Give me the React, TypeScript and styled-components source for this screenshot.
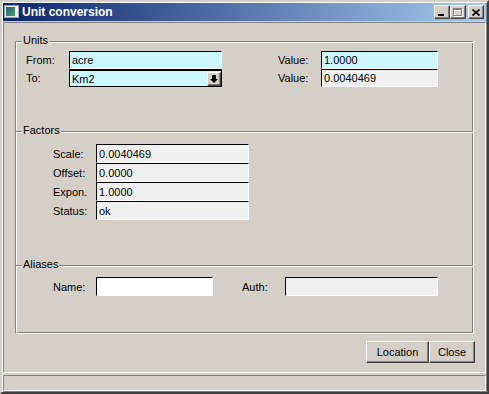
import styled, { createGlobalStyle } from 'styled-components';

const GlobalStyle = createGlobalStyle`
	html, body {
		margin: 0;
		padding: 0;
		background: #d4d0c8;
	}
	body {
		font-family: "Liberation Sans", Arial, sans-serif;
		font-size: 11px;
		color: #000;
	}
`;

const Window = styled.div`
	box-sizing: border-box;
	width: 489px;
	height: 394px;
	background: #d4d0c8;
	border: 2px solid;
	border-color: #d4d0c8 #404040 #404040 #d4d0c8;
	box-shadow: inset 1px 1px 0 #fff, inset -1px -1px 0 #808080;
	padding: 1px;
	display: flex;
	flex-direction: column;
`;

const TitleBar = styled.div`
	flex: none;
	height: 18px;
	display: flex;
	align-items: center;
	padding: 0 2px 0 1px;
	background: linear-gradient(to right, #0a246a, #a6caf0);
`;

const TitleText = styled.span`
	flex: 1;
	margin-left: 2px;
	color: #fff;
	font-weight: bold;
	font-size: 12px;
	white-space: nowrap;
`;

const CaptionButton = styled.div<{ $gap?: boolean }>`
	box-sizing: border-box;
	width: 16px;
	height: 14px;
	margin-left: ${p => (p.$gap ? 2 : 0)}px;
	background: #d4d0c8;
	border: 1px solid;
	border-color: #fff #404040 #404040 #fff;
	box-shadow: inset -1px -1px 0 #808080;
	display: flex;
	align-items: center;
	justify-content: center;
`;

const Panel = styled.div`
	box-sizing: border-box;
	flex: none;
	height: 351px;
	margin-top: 1px;
	border: 1px solid;
	border-color: #808080 #fff #fff #808080;
	padding: 18px 11px 9px 11px;
	display: flex;
	flex-direction: column;
`;

const Groups = styled.div`
	border-left: 1px solid #808080;
	border-right: 1px solid #fff;
	border-bottom: 1px solid #fff;
	box-shadow: inset 1px 0 0 #fff, inset -1px -1px 0 #808080;
	display: flex;
	flex-direction: column;
`;

const Section = styled.div<{ $h: number; $pt: number; $pl: number }>`
	position: relative;
	box-sizing: border-box;
	height: ${p => p.$h}px;
	border-top: 1px solid #808080;
	box-shadow: inset 0 1px 0 #fff;
	padding: ${p => p.$pt}px 0 0 ${p => p.$pl}px;
`;

const Legend = styled.span`
	position: absolute;
	top: -8px;
	left: 6px;
	padding: 0 1px;
	line-height: 13px;
	background: #d4d0c8;
`;

const FormGrid = styled.div<{ $cols: string; $row: number }>`
	display: grid;
	grid-template-columns: ${p => p.$cols};
	grid-auto-rows: ${p => p.$row}px;
`;

const Label = styled.span`
	align-self: center;
	white-space: nowrap;
`;

const Field = styled.div<{ $bg: string }>`
	box-sizing: border-box;
	border: 1px solid;
	border-color: #000 #fff #fff #000;
	background: ${p => p.$bg};
	padding: 0 2px;
	display: flex;
	align-items: center;
	white-space: nowrap;
	overflow: hidden;
`;

const Combo = styled.div`
	box-sizing: border-box;
	border: 1px solid #000;
	box-shadow: inset 0 1px 0 #000;
	background: #ccf7ff;
	padding: 1px 0 0 2px;
	display: flex;
	align-items: center;
`;

const ComboText = styled.span`
	flex: 1;
`;

const ArrowButton = styled.div`
	box-sizing: border-box;
	width: 14px;
	height: 14px;
	background: #d4d0c8;
	border: 1px solid;
	border-color: #fff #404040 #404040 #fff;
	box-shadow: inset -1px -1px 0 #808080;
	display: flex;
	align-items: center;
	justify-content: center;
`;

const ButtonRow = styled.div`
	display: flex;
	justify-content: flex-end;
	margin: 7px -1px 0 0;
`;

const Button = styled.div<{ $w: number }>`
	box-sizing: border-box;
	width: ${p => p.$w}px;
	height: 22px;
	border: 1px solid;
	border-color: #fff #404040 #404040 #fff;
	box-shadow: inset -1px -1px 0 #808080;
	display: flex;
	align-items: center;
	justify-content: center;
`;

const StatusBar = styled.div`
	box-sizing: border-box;
	flex: none;
	height: 16px;
	margin-top: 2px;
	border: 1px solid;
	border-color: #808080 #fff #fff #808080;
`;

const CYAN = '#ccf7ff';
const GREY = '#f0f0f0';
const WHITE = '#ffffff';

function AppIcon() {
	return (
		<svg width="16" height="14" viewBox="0 0 16 14">
			<defs>
				<linearGradient id="ico" x1="0" y1="0" x2="1" y2="1">
					<stop offset="0" stopColor="#2a5f7a" />
					<stop offset="1" stopColor="#4f9a6a" />
				</linearGradient>
			</defs>
			<rect x="0.5" y="0.5" width="14" height="12" fill="#e8e8e8" stroke="#9aa4ac" />
			<rect x="2" y="2" width="9" height="9" fill="url(#ico)" />
			<rect x="12" y="2" width="2" height="6" fill="#fff" />
			<rect x="12" y="9" width="2" height="2" fill="#fff" />
		</svg>
	);
}

function DownArrow() {
	return (
		<svg width="8" height="8" viewBox="0 0 8 8">
			<rect x="2" y="0" width="4" height="4" fill="#000" />
			<polygon points="0,4 8,4 4,8" fill="#000" />
		</svg>
	);
}

export default function App() {
	return (
		<>
			<GlobalStyle />
			<Window>
				<TitleBar>
					<AppIcon />
					<TitleText>Unit conversion</TitleText>
					<CaptionButton>
						<svg width="8" height="7" viewBox="0 0 8 7">
							<rect x="0" y="5" width="6" height="2" fill="#000" />
						</svg>
					</CaptionButton>
					<CaptionButton>
						<svg width="10" height="9" viewBox="0 0 10 9">
							<rect x="1.5" y="1.5" width="8" height="7" fill="none" stroke="#fff" />
							<rect x="1" y="2" width="8" height="1" fill="#fff" />
							<rect x="0.5" y="0.5" width="8" height="7" fill="none" stroke="#808080" />
							<rect x="0" y="1" width="9" height="1" fill="#808080" />
						</svg>
					</CaptionButton>
					<CaptionButton $gap>
						<svg width="8" height="7" viewBox="0 0 8 7">
							<path d="M0.5 0.5 L7.5 6.5 M7.5 0.5 L0.5 6.5" stroke="#000" strokeWidth="1.6" />
						</svg>
					</CaptionButton>
				</TitleBar>

				<Panel>
					<Groups>
						<Section $h={90} $pt={9} $pl={10}>
							<Legend>Units</Legend>
							<FormGrid $cols="43px 153px 56px 43px 117px" $row={18}>
								<Label>From:</Label>
								<Field $bg={CYAN}>acre</Field>
								<span />
								<Label>Value:</Label>
								<Field $bg={CYAN}>1.0000</Field>
								<Label>To:</Label>
								<Combo>
									<ComboText>Km2</ComboText>
									<ArrowButton>
										<DownArrow />
									</ArrowButton>
								</Combo>
								<span />
								<Label>Value:</Label>
								<Field $bg={GREY}>0.0040469</Field>
							</FormGrid>
						</Section>

						<Section $h={134} $pt={12} $pl={37}>
							<Legend>Factors</Legend>
							<FormGrid $cols="43px 153px" $row={19}>
								<Label>Scale:</Label>
								<Field $bg={GREY}>0.0040469</Field>
								<Label>Offset:</Label>
								<Field $bg={GREY}>0.0000</Field>
								<Label>Expon.</Label>
								<Field $bg={GREY}>1.0000</Field>
								<Label>Status:</Label>
								<Field $bg={GREY}>ok</Field>
							</FormGrid>
						</Section>

						<Section $h={68} $pt={11} $pl={37}>
							<Legend>Aliases</Legend>
							<FormGrid $cols="43px 117px 29px 43px 153px" $row={19}>
								<Label>Name:</Label>
								<Field $bg={WHITE} />
								<span />
								<Label>Auth:</Label>
								<Field $bg={GREY} />
							</FormGrid>
						</Section>
					</Groups>

					<ButtonRow>
						<Button $w={63}>Location</Button>
						<Button $w={46}>Close</Button>
					</ButtonRow>
				</Panel>

				<StatusBar />
			</Window>
		</>
	);
}
